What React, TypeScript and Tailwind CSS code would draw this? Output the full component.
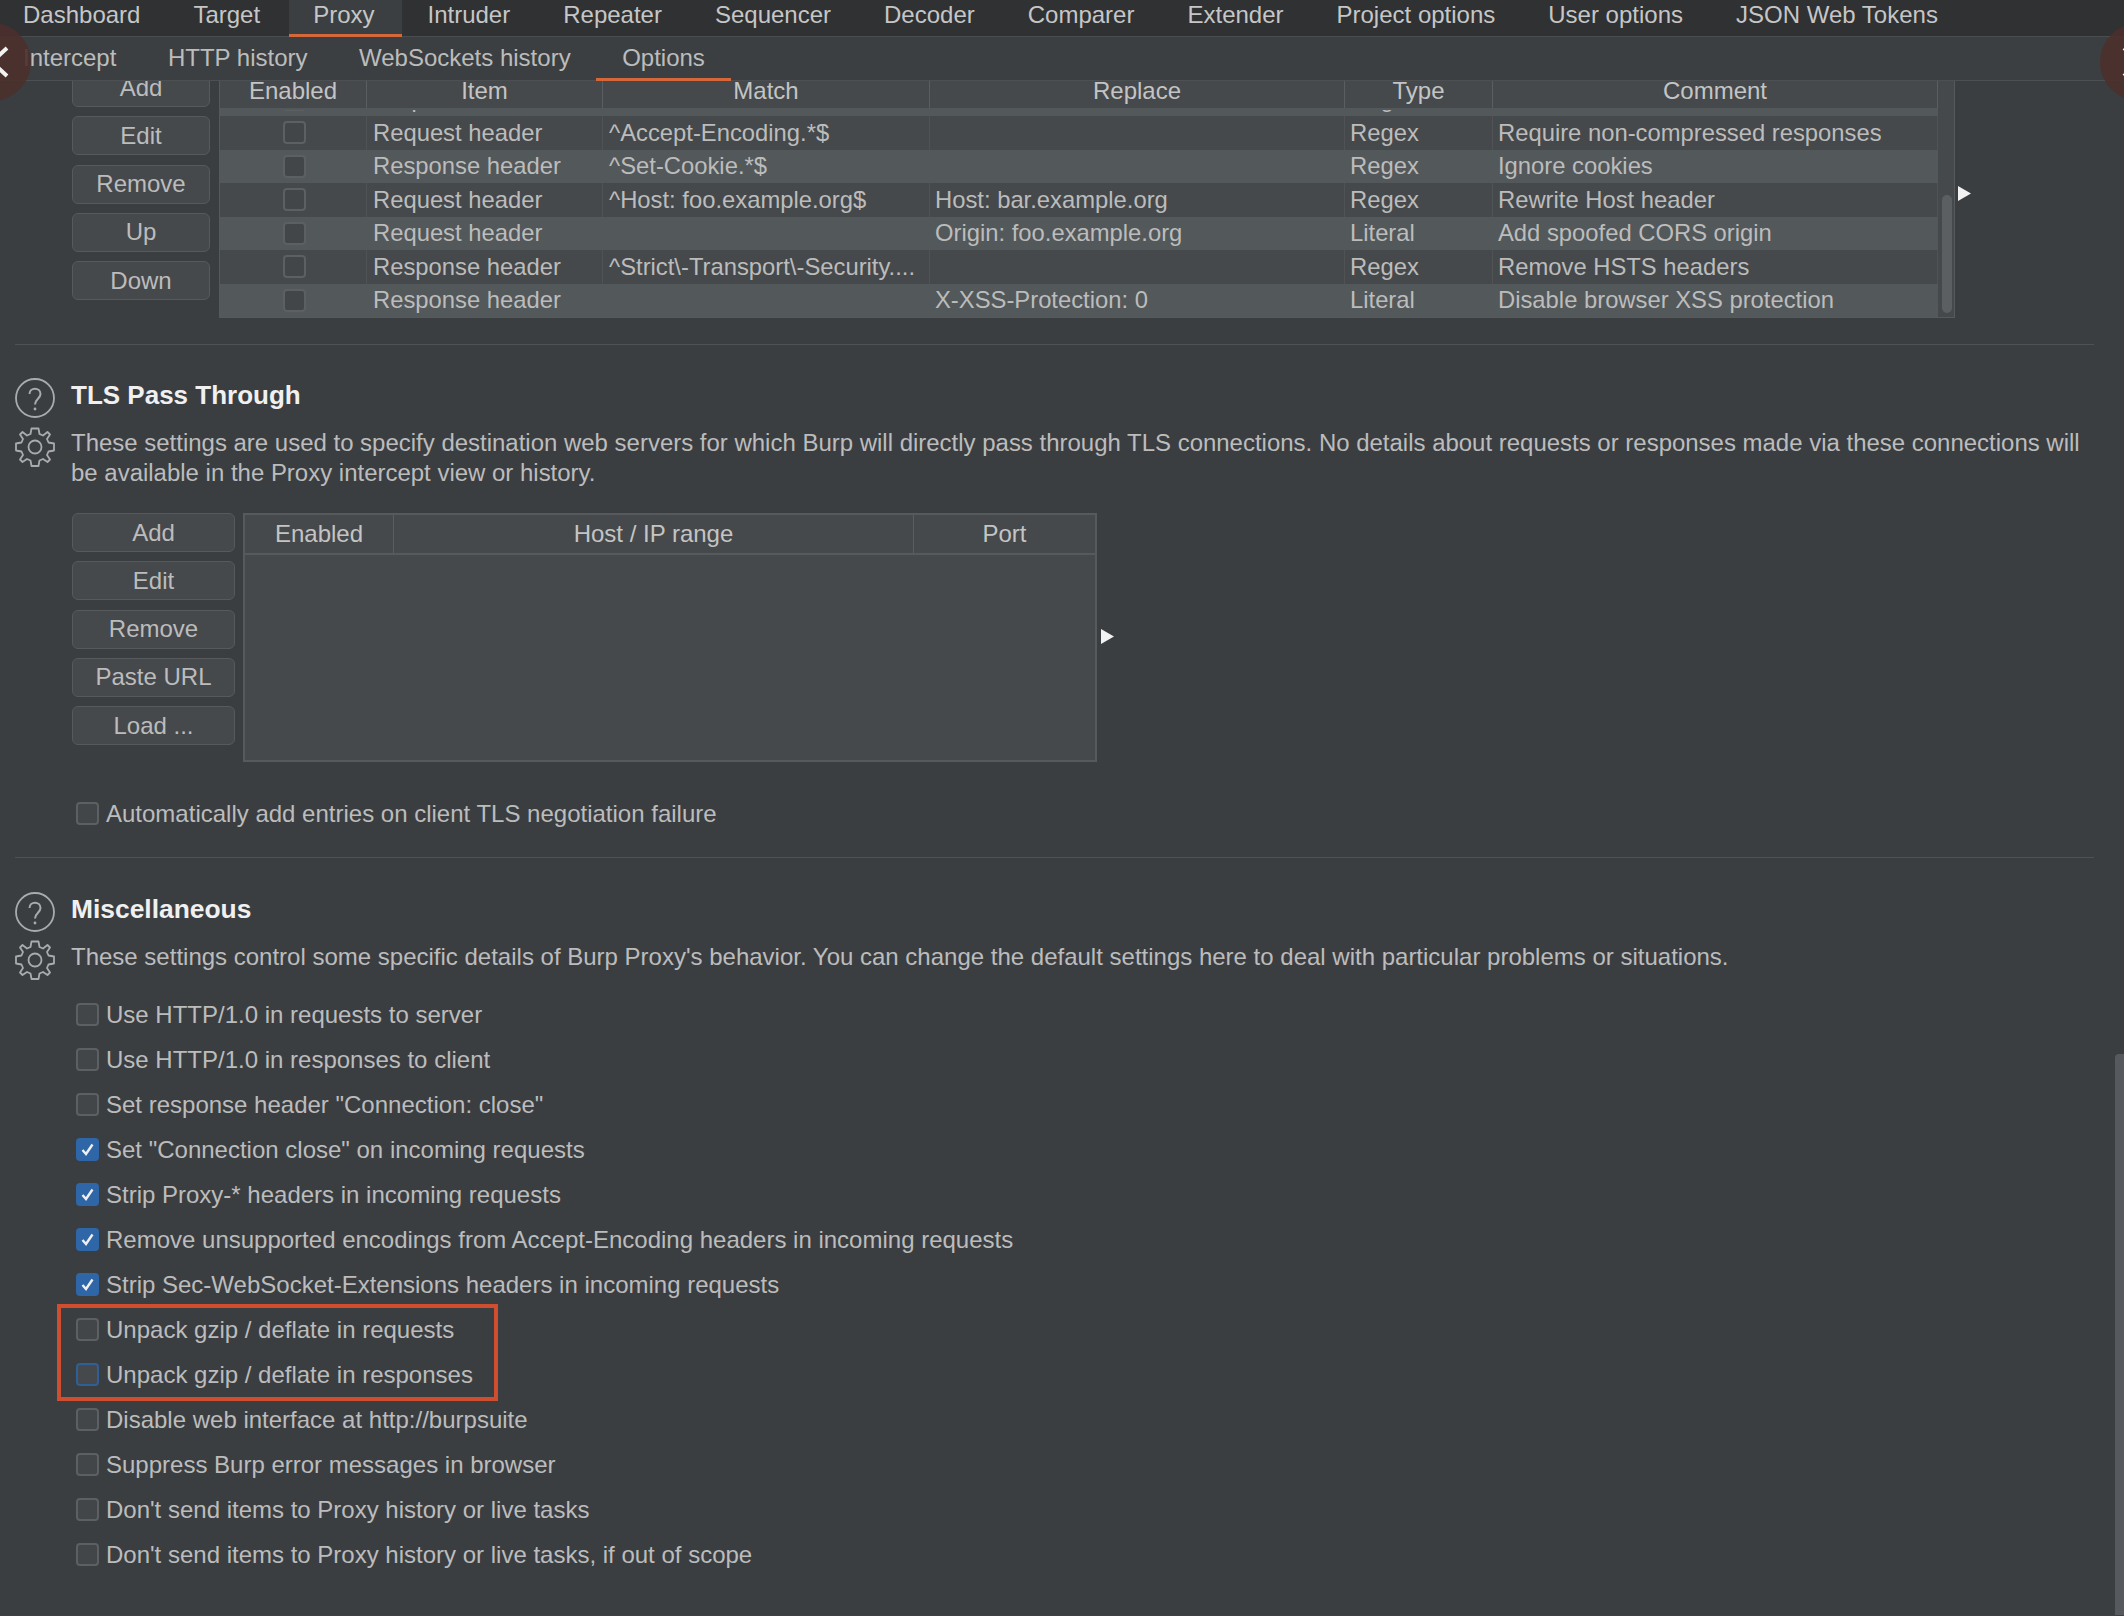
const mainTabs = ["Dashboard", "Target", "Proxy", "Intruder", "Repeater", "Sequencer", "Decoder", "Comparer", "Extender", "Project options", "User options", "JSON Web Tokens"];
const subTabs = ["Intercept", "HTTP history", "WebSockets history", "Options"];
const rules = [
  ["Request header", "^Accept-Encoding.*$", "", "Regex", "Require non-compressed responses"],
  ["Response header", "^Set-Cookie.*$", "", "Regex", "Ignore cookies"],
  ["Request header", "^Host: foo.example.org$", "Host: bar.example.org", "Regex", "Rewrite Host header"],
  ["Request header", "", "Origin: foo.example.org", "Literal", "Add spoofed CORS origin"],
  ["Response header", "^Strict\\-Transport\\-Security....", "", "Regex", "Remove HSTS headers"],
  ["Response header", "", "X-XSS-Protection: 0", "Literal", "Disable browser XSS protection"],
];
const misc: [string, boolean][] = [
  ["Use HTTP/1.0 in requests to server", false],
  ["Use HTTP/1.0 in responses to client", false],
  ['Set response header "Connection: close"', false],
  ['Set "Connection close" on incoming requests', true],
  ["Strip Proxy-* headers in incoming requests", true],
  ["Remove unsupported encodings from Accept-Encoding headers in incoming requests", true],
  ["Strip Sec-WebSocket-Extensions headers in incoming requests", true],
];
const miscAfter = [
  "Disable web interface at http://burpsuite",
  "Suppress Burp error messages in browser",
  "Don't send items to Proxy history or live tasks",
  "Don't send items to Proxy history or live tasks, if out of scope",
];
const colW = ["w-[147px]", "w-[236px]", "w-[327px]", "w-[415px]", "w-[148px]", "w-[445px]"];
const cellPad = ["pl-[6px]", "pl-[6px]", "pl-[5px]", "pl-[5px]", "pl-[5px]"];

function Btn({ children, wide }: { children: string; wide?: boolean }) {
  return (
    <div className={`${wide ? "w-[163px]" : "w-[138px]"} h-[39px] shrink-0 flex items-center justify-center rounded-[6px] border border-[#565a5c] bg-[#46494c] text-[#bcbcbc]`}>
      {children}
    </div>
  );
}

function Box({ checked, focus }: { checked?: boolean; focus?: boolean }) {
  if (checked) {
    return (
      <span className="w-[23px] h-[23px] shrink-0 rounded-[4px] bg-[#2f66a8] flex items-center justify-center">
        <svg width="15" height="15" viewBox="0 0 15 15" fill="none">
          <path d="M2.5 8 L6 12 L12.5 2.5" stroke="#f0f0f0" strokeWidth="2.4" />
        </svg>
      </span>
    );
  }
  return <span className={`w-[23px] h-[23px] shrink-0 rounded-[4px] border-2 ${focus ? "border-[#2e5f96] bg-[#45494c]" : "border-[#5c6062] bg-[#434649]"}`} />;
}

function Check({ label, checked, focus }: { label: string; checked?: boolean; focus?: boolean }) {
  return (
    <div className="h-[45px] flex items-center pl-[5px] gap-[7px] text-[#bcbcbc]">
      <Box checked={checked} focus={focus} />
      <span>{label}</span>
    </div>
  );
}

function Arrow() {
  return (
    <svg width="13" height="15" viewBox="0 0 13 15" className="shrink-0">
      <path d="M0 0 L13 7.5 L0 15 Z" fill="#f2f2f2" />
    </svg>
  );
}

function HelpIcon() {
  return (
    <svg width="40" height="40" viewBox="0 0 40 40" fill="none" className="block">
      <circle cx="20" cy="20" r="19" stroke="#a9abac" strokeWidth="1.8" />
      <path d="M14.5 16 C14.5 9 25.5 9 25.5 16 C25.5 20.5 20 21 20 26.5" stroke="#a9abac" strokeWidth="2" />
      <circle cx="20" cy="31" r="1.4" fill="#a9abac" />
    </svg>
  );
}

function GearIcon() {
  return (
    <svg width="40" height="40" viewBox="0 0 40 40" fill="none" className="block">
      <path
        d="M16.5 1.5 H23.5 L24.5 7 L28 8.5 L32.5 5 L35 7.5 L32 12 L33.5 15.5 L39 16.5 V23.5 L33.5 24.5 L32 28 L35 32.5 L32.5 35 L28 32 L24.5 33.5 L23.5 39 H16.5 L15.5 33.5 L12 32 L7.5 35 L5 32.5 L8 28 L6.5 24.5 L1 23.5 V16.5 L6.5 15.5 L8 12 L5 7.5 L7.5 5 L12 8.5 L15.5 7 Z"
        stroke="#a9abac"
        strokeWidth="1.8"
        strokeLinejoin="round"
      />
      <circle cx="20" cy="20" r="6.5" stroke="#a9abac" strokeWidth="1.8" />
    </svg>
  );
}

function Row({ r, alt }: { r: string[]; alt: boolean }) {
  return (
    <div className={`flex h-[33.5px] shrink-0 items-center whitespace-nowrap text-[23.8px] ${alt ? "bg-[#53585a]" : "bg-[#45494b]"}`}>
      <div className={`${colW[0]} flex justify-center pl-[2px] h-full items-center border-r ${alt ? "border-transparent" : "border-[#4f5355]"}`}>
        <Box />
      </div>
      {r.map((c, i) => (
        <div key={i} className={`${colW[i + 1]} ${cellPad[i]} h-full flex items-center overflow-hidden border-r ${alt ? "border-transparent" : "border-[#4f5355]"}`}>
          {c}
        </div>
      ))}
    </div>
  );
}

export default function App() {
  return (
    <div className="relative w-[2124px] h-[1616px] overflow-hidden flex flex-col bg-[#3b3e41] text-[24px] leading-[30px] text-[#bcbcbc] [font-family:'Liberation_Sans',Arial,sans-serif]">
      {/* main tabs */}
      <div className="h-[37px] shrink-0 flex bg-[#2f3133] border-b border-[#4a4d4f] pl-[23px] gap-[53px] text-[#c6c6c6]">
        {mainTabs.map((t) => (
          <div key={t} className={`relative h-[36px] flex items-center pb-[7px] whitespace-nowrap ${t === "Proxy" ? "pl-[24px] pr-[28px] -ml-[24px] -mr-[28px] bg-[#3c3f41]" : ""}`}>
            {t}
            {t === "Proxy" && <span className="absolute left-0 right-0 bottom-[-1px] h-[3px] bg-[#d4683a]" />}
          </div>
        ))}
      </div>
      {/* sub tabs */}
      <div className="relative z-10 h-[44px] shrink-0 flex bg-[#3c3f41] border-b border-[#4d5052] pl-[23px] gap-[51.5px]">
        {subTabs.map((t) => (
          <div key={t} className={`relative h-[43px] flex items-center pb-[2px] whitespace-nowrap ${t === "Options" ? "px-[26px] -mx-[26px]" : ""}`}>
            {t}
            {t === "Options" && <span className="absolute left-0 right-0 bottom-[-1px] h-[3px] bg-[#d4683a]" />}
          </div>
        ))}
      </div>

      {/* content */}
      <div className="flex-1 overflow-hidden">
        {/* match and replace */}
        <div className="flex pl-[72px] -mt-[13px]">
          <div className="flex flex-col gap-[9.3px] w-[138px]">
            {["Add", "Edit", "Remove", "Up", "Down"].map((b) => (
              <Btn key={b}>{b}</Btn>
            ))}
          </div>
          <div className="ml-[9px] w-[1736px] h-[250px] border border-[#565a5c] flex">
            <div className="w-[1718px] flex flex-col">
              <div className="h-[41px] shrink-0 flex pt-[5px] items-center bg-[#45494b] border-b-2 border-[#53585a] text-[#c4c4c4]">
                {["Enabled", "Item", "Match", "Replace", "Type", "Comment"].map((h, i) => (
                  <div key={h} className={`${colW[i]} h-full flex items-center justify-center border-r border-[#5a5e60]`}>
                    {h}
                  </div>
                ))}
              </div>
              <div className="h-[6px] shrink-0 overflow-hidden bg-[#53585a]">
                <div className="-mt-[27.5px]">
                  <Row r={["Request header", "", "", "Regex", ""]} alt />
                </div>
              </div>
              {rules.map((r, i) => (
                <Row key={i} r={r} alt={i % 2 === 1} />
              ))}
            </div>
            <div className="flex-1 bg-[#45494b] relative">
              <div className="absolute left-[4px] w-[10px] top-[126px] h-[118px] rounded-full bg-[#5b5f62]" />
            </div>
          </div>
          <div className="ml-[3px] mt-[118px]">
            <Arrow />
          </div>
        </div>

        <div className="mt-[26px] ml-[15px] w-[2079px] h-px bg-[#4f5254]" />

        {/* TLS pass through */}
        <div className="mt-[33px] flex pl-[15px]">
          <div className="w-[40px] flex flex-col gap-[9px]">
            <HelpIcon />
            <GearIcon />
          </div>
          <div className="ml-[16px]">
            <div className="mt-[2px] text-[26px] font-bold text-[#f0f0f0]">TLS Pass Through</div>
            <div className="mt-[18px] w-[2030px] text-[23.97px]">
              These settings are used to specify destination web servers for which Burp will directly pass through TLS connections. No details about requests or responses made via these connections will be available in the Proxy intercept view or history.
            </div>
            <div className="mt-[25px] flex pl-px">
              <div className="flex flex-col gap-[9.3px]">
                {["Add", "Edit", "Remove", "Paste URL", "Load ..."].map((b) => (
                  <Btn key={b} wide>
                    {b}
                  </Btn>
                ))}
              </div>
              <div className="ml-[8px] w-[854px] h-[249px] border-2 border-[#565a5c] bg-[#45494b] flex flex-col">
                <div className="h-[40px] flex border-b-2 border-[#565a5c] text-[#c4c4c4]">
                  <div className="w-[149px] flex items-center justify-center border-r border-[#5a5e60]">Enabled</div>
                  <div className="w-[520px] flex items-center justify-center border-r border-[#5a5e60]">Host / IP range</div>
                  <div className="flex-1 flex items-center justify-center">Port</div>
                </div>
              </div>
              <div className="ml-[4px] mt-[116px]">
                <Arrow />
              </div>
            </div>
            <div className="mt-[29px]">
              <Check label="Automatically add entries on client TLS negotiation failure" />
            </div>
          </div>
        </div>

        <div className="mt-[21px] ml-[15px] w-[2079px] h-px bg-[#4f5254]" />

        {/* miscellaneous */}
        <div className="mt-[34px] flex pl-[15px]">
          <div className="w-[40px] flex flex-col gap-[8px]">
            <HelpIcon />
            <GearIcon />
          </div>
          <div className="ml-[16px]">
            <div className="mt-[2px] text-[26.4px] font-bold text-[#f0f0f0]">Miscellaneous</div>
            <div className="mt-[18px]">
              These settings control some specific details of Burp Proxy's behavior. You can change the default settings here to deal with particular problems or situations.
            </div>
            <div className="mt-[20px]">
              {misc.map(([l, c]) => (
                <Check key={l} label={l} checked={c} />
              ))}
              <div className="relative">
                <Check label="Unpack gzip / deflate in requests" />
                <Check label="Unpack gzip / deflate in responses" focus />
                <div className="absolute -left-[14px] -top-[3px] -bottom-[4px] w-[441px] border-4 border-[#cf4e2f]" />
              </div>
              {miscAfter.map((l) => (
                <Check key={l} label={l} />
              ))}
            </div>
          </div>
        </div>
      </div>

      {/* overlays */}
      <div className="absolute z-20 left-[-47px] top-[23px] w-[78px] h-[78px] rounded-full bg-[#4b302c]/90 overflow-hidden">
        <svg width="78" height="78" viewBox="0 0 78 78" fill="none">
          <path d="M54 25 L39 39 L54 53" stroke="#f2f2f2" strokeWidth="4" />
        </svg>
      </div>
      <div className="absolute z-20 left-[2100px] top-[23px] w-[78px] h-[78px] rounded-full bg-[#4b302c]/90 overflow-hidden">
        <svg width="78" height="78" viewBox="0 0 78 78" fill="none">
          <path d="M24 25 L39 39 L24 53" stroke="#f2f2f2" strokeWidth="4" />
        </svg>
      </div>
      <div className="absolute right-0 top-[1054px] bottom-0 w-[9px] rounded-tl-[4px] bg-[#565a5e]" />
      <div className="absolute left-0 right-0 bottom-0 h-px bg-[#4a3a38]" />
    </div>
  );
}
